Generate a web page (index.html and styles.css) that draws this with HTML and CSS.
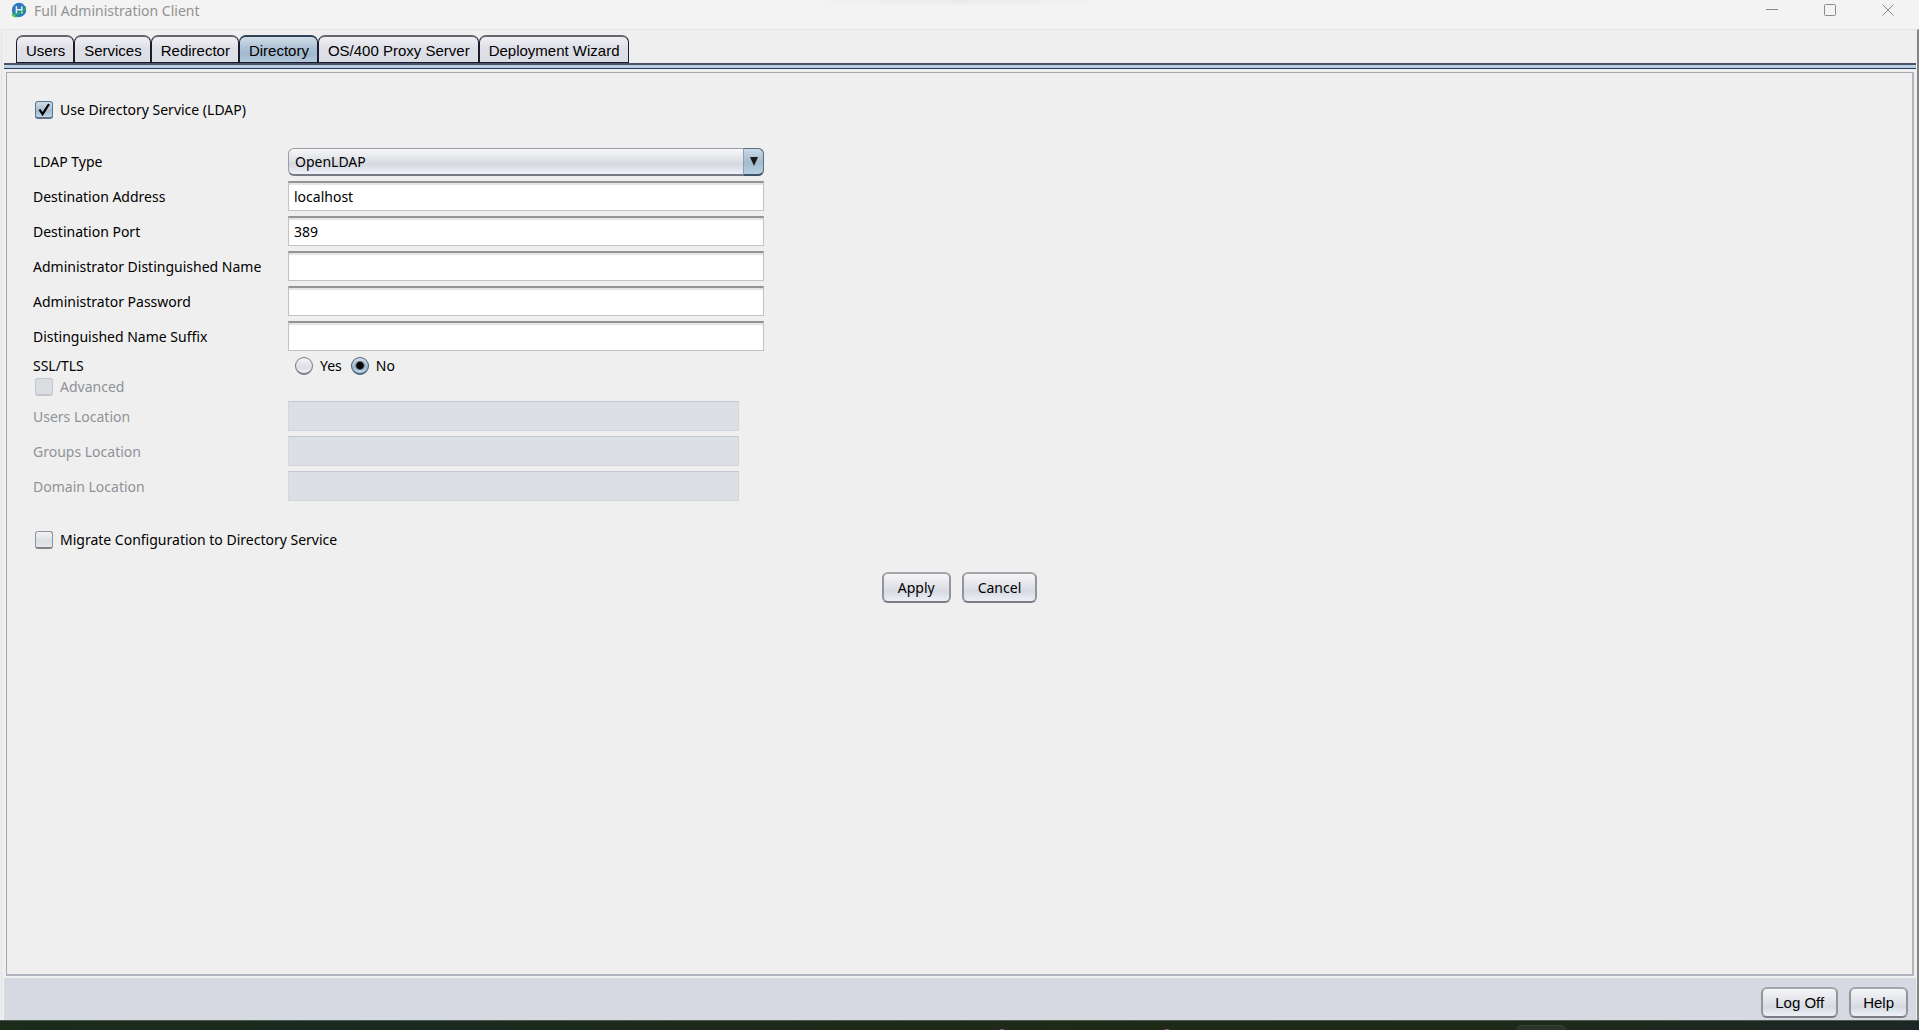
FILE: index.html
```html
<!DOCTYPE html>
<html lang="en">
<head>
    <meta charset="UTF-8">
    <title>Full Administration Client</title>
    <link rel="stylesheet" href="styles.css">
</head>
<body>
<div class="window">
    <header class="title-bar">
        <svg class="logo" viewBox="0 0 16 16">
            <circle cx="8" cy="8" r="7.2" fill="#2f78bd"/>
            <path d="M5.4 4.2v7.2M10.8 4.2v7.2M5.4 7.8h5.4" fill="none" stroke="#e4f1fb" stroke-width="1.5"/>
            <path d="M0.8 12.2C5 13.4 12.6 10.4 15 4.4M1 12.2C2 14 4 14.8 6 14.8" fill="none" stroke="#1fc834" stroke-width="1.2"/>
        </svg>
        <span class="title">Full Administration Client</span>
        <div class="window-buttons">
            <button type="button" aria-label="Minimize"><svg viewBox="0 0 12 12"><path d="M0 5.5h12"/></svg></button>
            <button type="button" aria-label="Maximize"><svg viewBox="0 0 12 12"><rect x="0.5" y="0.5" width="11" height="11" rx="1"/></svg></button>
            <button type="button" aria-label="Close"><svg viewBox="0 0 12 12"><path d="M0.5 0.5l11 11M11.5 0.5l-11 11"/></svg></button>
        </div>
    </header>
    <div class="client">
        <nav class="tabs">
            <button type="button" class="tab">Users</button>
            <button type="button" class="tab">Services</button>
            <button type="button" class="tab">Redirector</button>
            <button type="button" class="tab active">Directory</button>
            <button type="button" class="tab">OS/400 Proxy Server</button>
            <button type="button" class="tab">Deployment Wizard</button>
        </nav>
        <div class="tab-line"></div>
        <form class="panel">
            <div class="check-row">
                <span class="check">
                    <input type="checkbox" id="useLdap" checked>
                    <svg viewBox="0 0 18 18"><path d="M4.5 8.5L7.6 13.2L14 3"/></svg>
                </span>
                <label for="useLdap">Use Directory Service (LDAP)</label>
            </div>
            <div class="fields">
                <div class="row">
                    <label for="ldapType">LDAP Type</label>
                    <div class="combo">
                        <select id="ldapType">
                            <option>OpenLDAP</option>
                        </select>
                        <span class="combo-arrow"><svg viewBox="0 0 8 9"><path d="M0 0h8L4 9z"/></svg></span>
                    </div>
                </div>
                <div class="row">
                    <label for="address">Destination Address</label>
                    <input type="text" class="text" id="address" value="localhost">
                </div>
                <div class="row">
                    <label for="port">Destination Port</label>
                    <input type="text" class="text" id="port" value="389">
                </div>
                <div class="row">
                    <label for="adminName">Administrator Distinguished Name</label>
                    <input type="text" class="text" id="adminName">
                </div>
                <div class="row">
                    <label for="adminPassword">Administrator Password</label>
                    <input type="password" class="text" id="adminPassword">
                </div>
                <div class="row">
                    <label for="suffix">Distinguished Name Suffix</label>
                    <input type="text" class="text" id="suffix">
                </div>
                <div class="row short" role="radiogroup" aria-labelledby="sslLabel">
                    <span id="sslLabel">SSL/TLS</span>
                    <div class="radios">
                        <input type="radio" name="ssl" id="sslYes"><label for="sslYes">Yes</label>
                        <input type="radio" name="ssl" id="sslNo" checked><label for="sslNo">No</label>
                    </div>
                </div>
            </div>
            <div class="check-row disabled">
                <span class="check"><input type="checkbox" id="advanced" disabled></span>
                <label for="advanced">Advanced</label>
            </div>
            <div class="fields disabled">
                <div class="row">
                    <label for="usersLocation">Users Location</label>
                    <input type="text" class="text" id="usersLocation" disabled>
                </div>
                <div class="row">
                    <label for="groupsLocation">Groups Location</label>
                    <input type="text" class="text" id="groupsLocation" disabled>
                </div>
                <div class="row">
                    <label for="domainLocation">Domain Location</label>
                    <input type="text" class="text" id="domainLocation" disabled>
                </div>
            </div>
            <div class="check-row migrate">
                <span class="check"><input type="checkbox" id="migrate"></span>
                <label for="migrate">Migrate Configuration to Directory Service</label>
            </div>
            <div class="actions">
                <button type="button" class="btn">Apply</button>
                <button type="button" class="btn">Cancel</button>
            </div>
        </form>
        <footer class="footer">
            <button type="button" class="btn">Log Off</button>
            <button type="button" class="btn">Help</button>
        </footer>
    </div>
</div>
<!-- top edge of the desktop taskbar -->
<div class="taskbar">
    <span class="dot dot-left"></span>
    <span class="dot dot-right"></span>
    <span class="tray"></span>
</div>
</body>
</html>
```
FILE: styles.css
```css
* {
    box-sizing: border-box;
}
body {
    margin: 0;
    height: 100vh;
    display: flex;
    flex-direction: column;
    overflow: hidden;
    background: #efefef;
    color: #000;
    font-family: "Noto Sans", "Open Sans", sans-serif;
    font-size: 14px;
    line-height: 20px;
}
button, input, select {
    font: inherit;
    color: inherit;
    margin: 0;
}
.window {
    flex: 1;
    min-height: 0;
    display: flex;
    flex-direction: column;
}

/* title bar */
.title-bar {
    display: flex;
    align-items: flex-start;
    height: 29px;
    padding: 1px 2px 0 11px;
    background: radial-gradient(160px 6px at 50% 0, #e9e9e9, transparent) #f3f3f3;
    color: #929292;
}
.logo {
    width: 16px;
    height: 16px;
    margin: 1px 7px 0 0;
}
.title-bar .title {
    flex: 1;
}
.window-buttons {
    display: flex;
}
.window-buttons button {
    width: 58px;
    height: 18px;
    padding: 0;
    border: 0;
    background: none;
    display: flex;
    align-items: center;
    justify-content: center;
}
.window-buttons svg {
    width: 12px;
    height: 12px;
    fill: none;
    stroke: #8a8a8a;
}

/* tabs */
.client {
    flex: 1;
    min-height: 0;
    display: flex;
    flex-direction: column;
    border: 1px solid #e4e4e4;
    border-width: 1px 2px 0 1px;
    border-right-color: #858585;
    margin-left: 1px;
    padding: 0 1px 0 2px;
}
.tabs {
    display: flex;
    padding: 5px 12px 0;
    font-family: "Liberation Sans", Arial, sans-serif;
    font-size: 15px;
}
.tab {
    height: 28px;
    padding: 3px 8px 0 9px;
    border: 2px solid #1b1b2d;
    border-top-color: #66676d;
    border-bottom-width: 1px;
    border-left-width: 1px;
    border-right-width: 1px;
    border-radius: 7px 7px 0 0;
    background: linear-gradient(#f0f0f3, #dfe0e7 45%, #dcdde5);
}
.tab.active {
    border-top-color: #2f4256;
    background: linear-gradient(#d0dde8, #a9bfd3 50%, #a3bace 70%, #b3c8da);
}
.tab-line {
    height: 6px;
    border-top: 2px solid #4d5367;
    border-bottom: 1px solid #2a3a58;
    background: #b8cee4;
}

/* panel */
.panel {
    flex: 1;
    min-height: 0;
    margin: 3px 2px 2px;
    padding: 27px 26px 0;
    border: 1px solid #a3a8b1;
    border-width: 1px 2px 2px 1px;
    border-right-color: #b3b6bf;
    border-bottom-color: #b0b4be;
}
.check-row {
    display: flex;
    align-items: center;
    gap: 7px;
    height: 20px;
    padding-left: 2px;
}
.check {
    display: grid;
}
.check input, .check svg {
    grid-area: 1 / 1;
    width: 18px;
    height: 18px;
}
.check input {
    appearance: none;
    border: 1px solid #8f9299;
    border-bottom: 2px solid #7f828a;
    border-radius: 3px;
    background: linear-gradient(#f2f2f5, #dcdee4 60%, #e6e8ee);
}
.check input:checked {
    border-color: #5e7288;
    background: linear-gradient(#d0dde8, #a4bacd 60%, #bfd5e8);
}
.check input:disabled {
    border-color: #c3c6cd;
    background: #dadde2;
}
.check svg {
    z-index: 1;
    pointer-events: none;
    fill: none;
    stroke: #000;
    stroke-width: 2.2;
}
.fields {
    margin-top: 24px;
}
.row {
    display: grid;
    grid-template-columns: 255px 476px;
    align-items: center;
    height: 35px;
}
.short {
    height: 23px;
}
.text {
    width: 100%;
    height: 30px;
    margin-bottom: 2px;
    padding: 0 5px;
    border: 1px solid #c2c2c2;
    border-top: 2px solid #949494;
    border-radius: 0;
    background: #fff;
    box-shadow: inset 0 2px 1px #e4e4e4;
}
.combo {
    display: flex;
    position: relative;
}
.combo select {
    appearance: none;
    width: 100%;
    height: 28px;
    padding: 2px 28px 0 6px;
    border: 1px solid #9b9da4;
    border-bottom: 2px solid #777a85;
    border-radius: 6px;
    background: linear-gradient(#f7f7f9, #dfe1e7 45%, #d5d9e0 60%, #eef1f7);
}
.combo-arrow {
    position: absolute;
    top: 0;
    right: 0;
    bottom: 0;
    width: 21px;
    display: flex;
    align-items: center;
    justify-content: center;
    pointer-events: none;
    border: 1px solid #587087;
    border-bottom: 2px solid #3d5266;
    border-left-color: #8ba1b5;
    border-radius: 0 6px 6px 0;
    background: linear-gradient(#ccd9e5, #a4bacd 55%, #b9d0e4);
}
.combo-arrow svg {
    width: 8px;
    height: 9px;
    fill: #1a1a1a;
}
.radios {
    display: flex;
    align-items: center;
    padding-left: 7px;
}
.radios input {
    appearance: none;
    width: 18px;
    height: 18px;
    margin-right: 7px;
    border: 1px solid #777b83;
    border-bottom-width: 2px;
    border-radius: 50%;
    background: linear-gradient(#f4f4f6, #dcdfe5 60%, #eef0f4);
}
.radios input:checked {
    border-color: #4a6178;
    background: radial-gradient(circle, #000 3px, transparent 5px), linear-gradient(#d0dde8, #9fb6ca 60%, #c3d8ea);
}
.radios label {
    margin-right: 9px;
}

/* disabled part */
.disabled {
    color: #909297;
}
.fields.disabled {
    margin-top: 2px;
}
.disabled .row {
    grid-template-columns: 255px 451px;
}
.disabled .text {
    border: 1px solid #d3d6db;
    border-top-color: #c4c8ce;
    background: #dce0e5;
    box-shadow: none;
}
.migrate {
    margin-top: 26px;
}
.actions {
    display: flex;
    justify-content: center;
    gap: 11px;
    margin-top: 22px;
}
.btn {
    height: 31px;
    padding: 0 14px;
    border: 2px solid #92959c;
    border-top-color: #a2a4a9;
    border-bottom-color: #797c85;
    border-radius: 6px;
    background: linear-gradient(#f6f6f8, #dfe1e7 50%, #d6dae2 65%, #edf0f6);
}
.footer {
    display: flex;
    justify-content: flex-end;
    gap: 11px;
    height: 42px;
    padding: 9px 8px 0;
    background: #d6d9e1;
    font-family: "Liberation Sans", Arial, sans-serif;
    font-size: 15px;
}
.footer .btn {
    padding: 0 12px;
}

/* taskbar */
.taskbar {
    position: relative;
    height: 10px;
    border-top: 1px solid #4a5a4c;
    background: linear-gradient(90deg, #1c2c1b, #1b2a20 20%, #1f2a17 55%, #1d2a1a 80%, #1e2526);
    overflow: hidden;
}
.dot, .tray {
    position: absolute;
}
.dot {
    top: 8px;
    width: 8px;
    height: 8px;
    border-radius: 50%;
    background: #a04c9c;
}
.dot-left {
    left: 52%;
}
.dot-right {
    left: 60.6%;
}
.tray {
    top: 4px;
    left: 79%;
    width: 50px;
    height: 20px;
    border: 1px solid #354035;
    border-radius: 5px;
    background: #2b362b;
}
```
